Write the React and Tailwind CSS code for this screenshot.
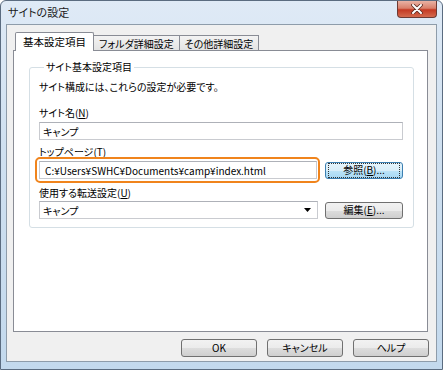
import React from "react";

const jp = "font-['Noto_Sans_CJK_JP','Noto_Sans',sans-serif] [font-feature-settings:'palt']";

const Button = ({ children, focused, className = "" }) => (
    <div
        className={`flex items-center justify-center rounded-[3px] border text-[10px] leading-none text-black ${
            focused
                ? "border-[#3c7fb1] bg-[linear-gradient(#e5f4fc_0%,#d9eef9_50%,#bde4f8_51%,#a7d8f4_100%)]"
                : "border-[#707070] bg-[linear-gradient(#f2f2f2_0%,#ebebeb_50%,#dddddd_51%,#cfcfcf_100%)]"
        } ${className}`}
    >
        {focused ? (
            <span className="m-[2px] flex h-full w-full items-center justify-center border border-dotted border-[#333]">
                {children}
            </span>
        ) : (
            children
        )}
    </div>
);

const Tab = ({ children, active }) =>
    active ? (
        <div className="relative z-10 -mb-px flex h-[19px] items-center rounded-t-[2px] border border-b-0 border-[#898c95] bg-white px-[7px] text-[10.5px]">
            {children}
        </div>
    ) : (
        <div className="-ml-px flex h-[15px] items-center border border-b-0 border-[#898c95] bg-[linear-gradient(#f3f3f3,#e3e3e3)] px-[5px] text-[10px]">
            {children}
        </div>
    );

const Field = ({ children, className = "" }) => (
    <div className={`flex h-[18px] items-center border border-[#c9cbd0] border-t-[#aeb1b8] bg-white px-[3px] text-[10px] ${className}`}>
        {children}
    </div>
);

export default function App() {
    return (
        <div className={`flex h-[370px] w-[443px] flex-col rounded-t-[6px] border border-[#5b6c80] bg-[linear-gradient(#dfeaf6,#cfe0f0_40%,#c3d9ed)] text-black ${jp}`}>
            {/* Title bar */}
            <div className="flex h-[23px] items-start justify-between">
                <div className="pl-[7px] pt-[5px] text-[11px] leading-[13px] text-[#1a1a1a]">サイトの設定</div>
                <div className="mr-[5px] flex h-[17px] w-[40px] items-center justify-center rounded-b-[4px] border border-t-0 border-[#6d3a33] bg-[linear-gradient(#e9b2a4_0%,#d9806b_45%,#c43a23_55%,#d46a4e_100%)]">
                    <svg width="12" height="10" viewBox="0 0 12 10">
                        <path d="M2 1 L10 9 M10 1 L2 9" stroke="#5a2a22" strokeWidth="3.6" strokeLinecap="round" />
                        <path d="M2 1 L10 9 M10 1 L2 9" stroke="#fff" strokeWidth="2" strokeLinecap="round" />
                    </svg>
                </div>
            </div>

            {/* Client area */}
            <div className="mx-[5px] flex flex-1 flex-col border border-[#8e9caa] bg-[#f0f0f0] pl-[6px] pr-[8px] pt-[7px]">
                {/* Tabs */}
                <div className="flex h-[18px] items-end pl-[2px]">
                    <Tab active>基本設定項目</Tab>
                    <Tab>フォルダ詳細設定</Tab>
                    <Tab>その他詳細設定</Tab>
                </div>

                {/* Panel */}
                <div className="h-[282px] border border-[#898c95] bg-white pl-[15px] pr-[13px] pt-[10px]">
                    <fieldset className="rounded-[3px] border border-[#d5dfe5] pb-[8px] pl-[9px] pr-[10px]">
                        <legend className="ml-[5px] px-[2px] text-[10px] leading-[12px]">サイト基本設定項目</legend>
                        <div className="mt-[8px] text-[10px] leading-[12px]">サイト構成には、これらの設定が必要です。</div>

                        <div className="mt-[14px] text-[10px] leading-[12px]">
                            サイト名(<span className="underline">N</span>)
                        </div>
                        <Field className="mt-[3px]">キャンプ</Field>

                        <div className="mt-[6px] text-[10px] leading-[12px]">
                            トップページ(<span className="underline">T</span>)
                        </div>
                        <div className="mt-[3px] flex items-center gap-[8px]">
                            <div className="relative flex-1">
                                <Field className="pl-[5px] text-[9.5px]">C:¥Users¥SWHC¥Documents¥camp¥index.html</Field>
                                <div className="absolute -inset-[4px] -right-[3px] rounded-[5px] border-2 border-[#f0841c]" />
                            </div>
                            <Button focused className="h-[17px] w-[78px]">
                                参照(<span className="underline">B</span>)...
                            </Button>
                        </div>

                        <div className="mt-[8px] text-[10px] leading-[12px]">
                            使用する転送設定(<span className="underline">U</span>)
                        </div>
                        <div className="mt-[2px] flex items-center gap-[7px]">
                            <Field className="flex-1 justify-between pr-[6px]">
                                <span>キャンプ</span>
                                <svg width="7" height="4" viewBox="0 0 7 4">
                                    <path d="M0 0 H7 L3.5 4 Z" fill="#000" />
                                </svg>
                            </Field>
                            <Button className="h-[17px] w-[78px]">
                                編集(<span className="underline">E</span>)...
                            </Button>
                        </div>
                    </fieldset>
                </div>

                {/* Bottom buttons */}
                <div className="-mr-px mt-[7px] flex justify-end gap-[10px]">
                    <Button className="h-[18px] w-[76px]">OK</Button>
                    <Button className="h-[18px] w-[76px]">キャンセル</Button>
                    <Button className="h-[18px] w-[76px]">ヘルプ</Button>
                </div>
            </div>
            <div className="h-[7px]" />
        </div>
    );
}
